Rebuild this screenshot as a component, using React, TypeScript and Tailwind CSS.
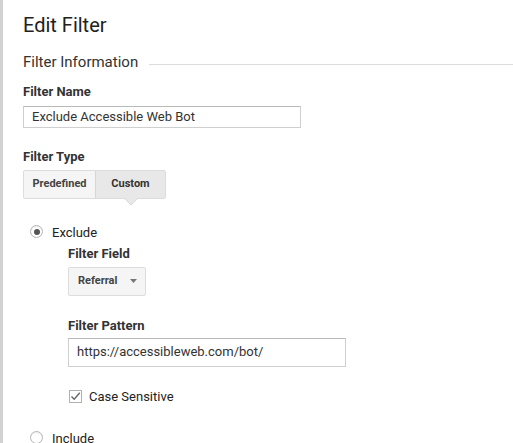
import React from "react";

function Radio({ checked }: { checked?: boolean }) {
  return (
    <span className="flex h-[13px] w-[13px] items-center justify-center rounded-full border border-[#b5b5b5] bg-white shadow-[inset_0_1px_1px_rgba(0,0,0,0.08)]">
      {checked && <span className="h-[6px] w-[6px] rounded-full bg-[#555]" />}
    </span>
  );
}

export default function App() {
  return (
    <div
      className="flex h-[443px] w-[513px] overflow-hidden border-l-[3px] border-[#d2d2d2] bg-white text-[#222]"
      style={{ fontFamily: "Roboto, 'Liberation Sans', sans-serif" }}
    >
      <div className="flex flex-1 flex-col pl-[20px]">
        <h1 className="mt-[13px] text-[20px] leading-[24px] font-normal text-[#212121]">Edit Filter</h1>

        <div className="mt-[15px] flex">
          <span className="text-[15px] leading-[20px] text-[#333]">Filter Information</span>
          <span className="ml-[11px] mt-[12px] h-px flex-1 bg-[#dcdcdc]" />
        </div>

        <div className="mt-[12px] text-[13px] leading-[16px] font-bold text-[#333]">Filter Name</div>
        <div className="mt-[6px] flex h-[29px] w-[278px] items-center border border-[#cfcfcf] border-t-[#b9b9b9] pl-[8px] text-[13px] text-[#333]">
          Exclude Accessible Web Bot
        </div>

        <div className="mt-[21px] text-[13px] leading-[16px] font-bold text-[#333]">Filter Type</div>
        <div className="mt-[5px] flex">
          <div className="flex h-[29px] rounded-[2px] border border-[#dcdcdc]">
            <div className="flex w-[71px] items-center justify-center bg-[#f5f5f5] text-[11px] font-bold text-[#444]">
              Predefined
            </div>
            <div className="relative flex w-[70px] items-center justify-center border-l border-[#d6d6d6] bg-[#e8e8e8] text-[11px] font-bold text-[#333]">
              Custom
              <svg
                className="absolute left-1/2 top-full -ml-[7px]"
                width="14"
                height="8"
                viewBox="0 0 14 8"
              >
                <polygon points="0,0 7,7 14,0" fill="#e8e8e8" />
                <polyline points="0,0 7,7 14,0" fill="none" stroke="#d9d9d9" strokeWidth="1" />
              </svg>
            </div>
          </div>
        </div>

        <div className="mt-[23px] flex h-[20px] items-center">
          <span className="ml-[7px]">
            <Radio checked />
          </span>
          <span className="ml-[9px] pt-[2px] text-[13px] text-[#222]">Exclude</span>
        </div>

        <div className="ml-[45px] flex flex-col">
          <div className="mt-[4px] text-[13px] leading-[16px] font-bold text-[#333]">Filter Field</div>
          <div className="mt-[5px] flex">
            <div className="flex h-[29px] w-[78px] items-center justify-between rounded-[2px] border border-[#dcdcdc] bg-[#f5f5f5] pl-[9px] pr-[8px]">
              <span className="text-[11px] font-bold text-[#444]">Referral</span>
              <svg width="7" height="4" viewBox="0 0 7 4">
                <polygon points="0,0 7,0 3.5,4" fill="#777" />
              </svg>
            </div>
          </div>

          <div className="mt-[22px] text-[13px] leading-[16px] font-bold text-[#333]">Filter Pattern</div>
          <div className="mt-[4px] flex h-[29px] w-[278px] items-center border border-[#cfcfcf] border-t-[#b9b9b9] pl-[8px] text-[13px] text-[#333]">
            https://accessibleweb.com/bot/
          </div>

          <div className="mt-[20px] flex h-[20px] items-center">
            <span className="ml-px flex h-[13px] w-[13px] items-center justify-center border border-[#b0b0b0] bg-white">
              <svg width="11" height="11" viewBox="0 0 11 11">
                <polyline points="1.5,5.5 4.2,8.3 9.8,1.8" fill="none" stroke="#666" strokeWidth="1.4" />
              </svg>
            </span>
            <span className="ml-[7px] text-[13px] text-[#222]">Case Sensitive</span>
          </div>
        </div>

        <div className="mt-[21px] flex h-[20px] items-center">
          <span className="ml-[7px]">
            <Radio />
          </span>
          <span className="ml-[9px] pt-[2px] text-[13px] text-[#222]">Include</span>
        </div>
      </div>
    </div>
  );
}
